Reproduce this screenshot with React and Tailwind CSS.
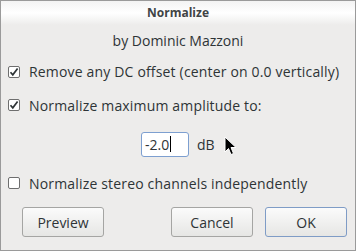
import React from "react";

const font = { fontFamily: '"Open Sans", "Noto Sans", sans-serif' };

function Check({ checked }) {
  return (
    <svg width="12" height="12" viewBox="0 0 12 12" className="shrink-0">
      <rect x="0.5" y="0.5" width="11" height="11" rx="1.5" fill="#ffffff" stroke="#6e6e6e" />
      {checked && (
        <path d="M2.5 6.2 L4.8 8.8 L9.6 2.4" fill="none" stroke="#2e3436" strokeWidth="1.7" />
      )}
    </svg>
  );
}

function Btn({ children, def }) {
  return (
    <div
      className={`w-[82px] h-[30px] flex items-center justify-center rounded-[3px] border bg-gradient-to-b from-[#fbfbfb] to-[#e6e6e4] text-[14px] text-[#2e3436] ${def ? "border-[#7f9cc6]" : "border-[#a5a5a3]"}`}
    >
      {children}
    </div>
  );
}

export default function App() {
  return (
    <div
      className="w-[356px] h-[251px] border border-[#9a9a9a] bg-[#edeceb] flex flex-col text-[#2e3436] overflow-hidden"
      style={font}
    >
      <div className="h-[24px] shrink-0 flex items-center justify-center bg-gradient-to-b from-[#f3f3f3] via-[#ffffff] to-[#edeceb] text-[12px] font-bold text-[#404445]">
        Normalize
      </div>
      <div className="h-[30px] flex items-center justify-center text-[14px]">by Dominic Mazzoni</div>
      <div className="flex items-center gap-[9px] pl-[7px] h-[33px] text-[14px] tracking-[0.17px]">
        <Check checked />
        <span>Remove any DC offset (center on 0.0 vertically)</span>
      </div>
      <div className="flex items-center gap-[9px] pl-[7px] h-[34px] text-[14px] tracking-[0.17px]">
        <Check checked />
        <span>Normalize maximum amplitude to:</span>
      </div>
      <div className="flex items-center h-[44px] pl-[140px] text-[14px] relative">
        <div className="w-[48px] h-[25px] bg-white border border-[#7d9fd0] rounded-[3px] flex items-center pl-[3px]">
          <span>-2.0</span>
          <span className="w-px h-[16px] bg-black ml-[1px]" />
        </div>
        <span className="ml-[8px]">dB</span>
        <svg className="absolute left-[223px] top-[14px]" width="14" height="20" viewBox="0 0 14 20">
          <path d="M1 1 L1 16 L4.5 12.5 L7 18.5 L9.5 17.5 L7 11.5 L12 11.5 Z" fill="#000" stroke="#fff" strokeWidth="1" />
        </svg>
      </div>
      <div className="flex items-center gap-[9px] pl-[7px] h-[34px] text-[14px] tracking-[0.17px]">
        <Check />
        <span>Normalize stereo channels independently</span>
      </div>
      <div className="flex items-center pl-[21px] pr-[8px] mt-[7px]">
        <Btn>Preview</Btn>
        <div className="flex-1" />
        <Btn>Cancel</Btn>
        <div className="w-[12px]" />
        <Btn def>OK</Btn>
      </div>
    </div>
  );
}
